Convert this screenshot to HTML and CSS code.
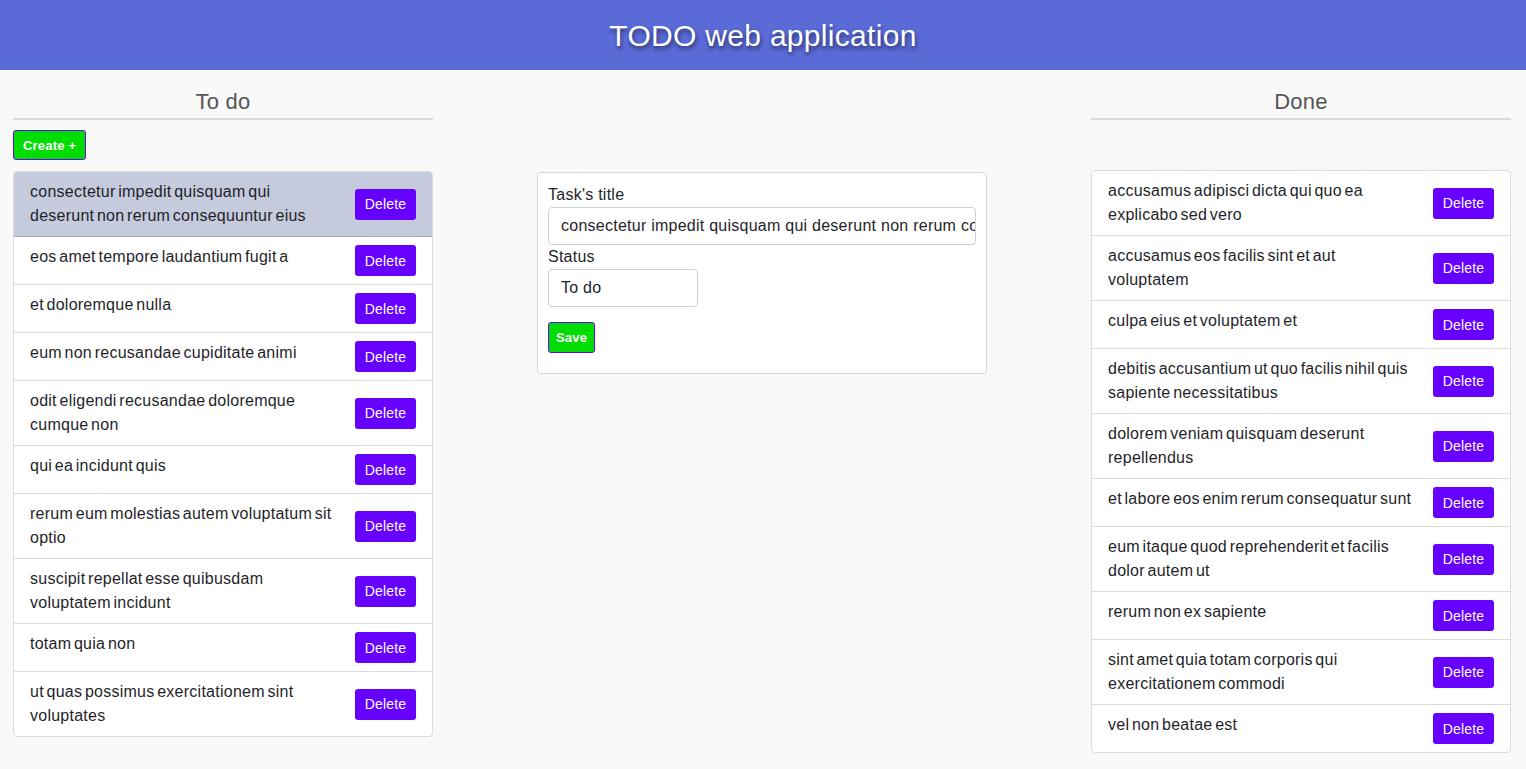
FILE: index.html
```html
<!DOCTYPE html>
<html lang="en">
<head>
<meta charset="utf-8">
<title>TODO web application</title>
<link rel="stylesheet" href="styles.css">
</head>
<body>
<header class="topbar">
  <h1 class="app-title">TODO web application</h1>
</header>
<main class="board">
  <section class="column">
    <h2 class="column-title">To do</h2>
    <div class="toolbar">
      <button class="btn btn-green btn-create">Create +</button>
    </div>
    <ul class="task-list">
      <li class="task active"><span class="task-text">consectetur impedit quisquam qui deserunt non rerum consequuntur eius</span><button class="btn btn-delete">Delete</button></li>
      <li class="task"><span class="task-text">eos amet tempore laudantium fugit a</span><button class="btn btn-delete">Delete</button></li>
      <li class="task"><span class="task-text">et doloremque nulla</span><button class="btn btn-delete">Delete</button></li>
      <li class="task"><span class="task-text">eum non recusandae cupiditate animi</span><button class="btn btn-delete">Delete</button></li>
      <li class="task"><span class="task-text">odit eligendi recusandae doloremque cumque non</span><button class="btn btn-delete">Delete</button></li>
      <li class="task"><span class="task-text">qui ea incidunt quis</span><button class="btn btn-delete">Delete</button></li>
      <li class="task"><span class="task-text">rerum eum molestias autem voluptatum sit optio</span><button class="btn btn-delete">Delete</button></li>
      <li class="task"><span class="task-text">suscipit repellat esse quibusdam voluptatem incidunt</span><button class="btn btn-delete">Delete</button></li>
      <li class="task"><span class="task-text">totam quia non</span><button class="btn btn-delete">Delete</button></li>
      <li class="task"><span class="task-text">ut quas possimus exercitationem sint voluptates</span><button class="btn btn-delete">Delete</button></li>
    </ul>
  </section>

  <section class="middle">
    <form class="editor">
      <label class="field-label">Task's title</label>
      <div class="input input-wide">consectetur impedit quisquam qui deserunt non rerum consequuntur eius</div>
      <label class="field-label">Status</label>
      <div class="input input-narrow">To do</div>
      <button type="button" class="btn btn-green btn-save">Save</button>
    </form>
  </section>

  <section class="column">
    <h2 class="column-title">Done</h2>
    <div class="toolbar"></div>
    <ul class="task-list done-list">
      <li class="task"><span class="task-text">accusamus adipisci dicta qui quo ea explicabo sed vero</span><button class="btn btn-delete">Delete</button></li>
      <li class="task"><span class="task-text">accusamus eos facilis sint et aut voluptatem</span><button class="btn btn-delete">Delete</button></li>
      <li class="task"><span class="task-text">culpa eius et voluptatem et</span><button class="btn btn-delete">Delete</button></li>
      <li class="task"><span class="task-text">debitis accusantium ut quo facilis nihil quis sapiente necessitatibus</span><button class="btn btn-delete">Delete</button></li>
      <li class="task"><span class="task-text">dolorem veniam quisquam deserunt repellendus</span><button class="btn btn-delete">Delete</button></li>
      <li class="task"><span class="task-text">et labore eos enim rerum consequatur sunt</span><button class="btn btn-delete">Delete</button></li>
      <li class="task"><span class="task-text">eum itaque quod reprehenderit et facilis dolor autem ut</span><button class="btn btn-delete">Delete</button></li>
      <li class="task"><span class="task-text">rerum non ex sapiente</span><button class="btn btn-delete">Delete</button></li>
      <li class="task"><span class="task-text">sint amet quia totam corporis qui exercitationem commodi</span><button class="btn btn-delete">Delete</button></li>
      <li class="task"><span class="task-text">vel non beatae est</span><button class="btn btn-delete">Delete</button></li>
    </ul>
  </section>
</main>
</body>
</html>
```
FILE: styles.css
```css
* { box-sizing: border-box; }

html, body {
  margin: 0;
  padding: 0;
}

body {
  background: #f9f9f9;
  font-family: "Liberation Sans", Arial, sans-serif;
  color: #1f1f2a;
  font-size: 16px;
  letter-spacing: 0.25px;
}

.topbar {
  height: 70px;
  background: #5a6bd8;
  display: flex;
  align-items: center;
  justify-content: center;
}

.app-title {
  margin: 0;
  color: #ffffff;
  font-weight: 400;
  font-size: 30px;
  letter-spacing: 0.3px;
  text-shadow: 1px 3px 4px rgba(0, 0, 0, 0.55);
  transform: translateY(1px);
}

.board {
  display: grid;
  grid-template-columns: 420px 1fr 420px;
  padding: 0 15px 0 13px;
  align-items: start;
}

.column-title {
  margin: 20px 0 0;
  text-align: center;
  font-weight: 400;
  font-size: 22px;
  color: #555;
  line-height: 24px;
  padding-bottom: 4px;
  border-bottom: 2px solid #dadada;
}

.toolbar {
  height: 51px;
  padding-top: 10px;
}

.btn {
  font-family: inherit;
  letter-spacing: 0.2px;
  cursor: pointer;
}

.btn-green {
  background: #00dd00;
  color: #fff;
  border: 1px solid #6b00ff;
  border-radius: 3px;
  font-weight: 700;
  font-size: 13px;
  height: 30px;
  padding: 0 8px;
}

.btn-create {
  padding: 0 9px;
}

.task-list {
  list-style: none;
  margin: 0;
  padding: 0;
  background: #fff;
  border: 1px solid #dcdcdc;
  border-radius: 4px;
  overflow: hidden;
}

.done-list {
  margin-top: -1px;
}

.task {
  display: flex;
  align-items: center;
  padding: 8px 16px;
  line-height: 24px;
  border-top: 1px solid #dcdcdc;
}

.task:first-child {
  border-top: none;
}

.task.active {
  background: #c5cadd;
  border-bottom: 1px solid #a9aec2;
}

.task.active + .task {
  border-top: none;
}

.task-text {
  flex: 1;
  align-self: flex-start;
  padding-right: 20px;
  word-spacing: -2px;
}

.btn-delete {
  flex: none;
  width: 61px;
  height: 31px;
  background: #6600ff;
  color: #fff;
  border: none;
  border-radius: 3px;
  font-size: 14px;
  padding: 0;
}

.middle {
  display: flex;
  justify-content: center;
  padding-top: 102px;
}

.editor {
  width: 450px;
  background: #fff;
  border: 1px solid #d6d6d6;
  border-radius: 4px;
  padding: 10px 10px 20px;
  display: flex;
  flex-direction: column;
  align-items: flex-start;
}

.field-label {
  line-height: 24px;
}

.input {
  height: 38px;
  border: 1px solid #d0d0d8;
  border-radius: 4px;
  padding: 0 12px;
  line-height: 36px;
  white-space: nowrap;
  overflow: hidden;
  background: #fff;
}

.input-wide {
  width: 100%;
}

.input-narrow {
  width: 150px;
}

.btn-save {
  margin-top: 15px;
  height: 31px;
  padding: 0 7px;
}
```
